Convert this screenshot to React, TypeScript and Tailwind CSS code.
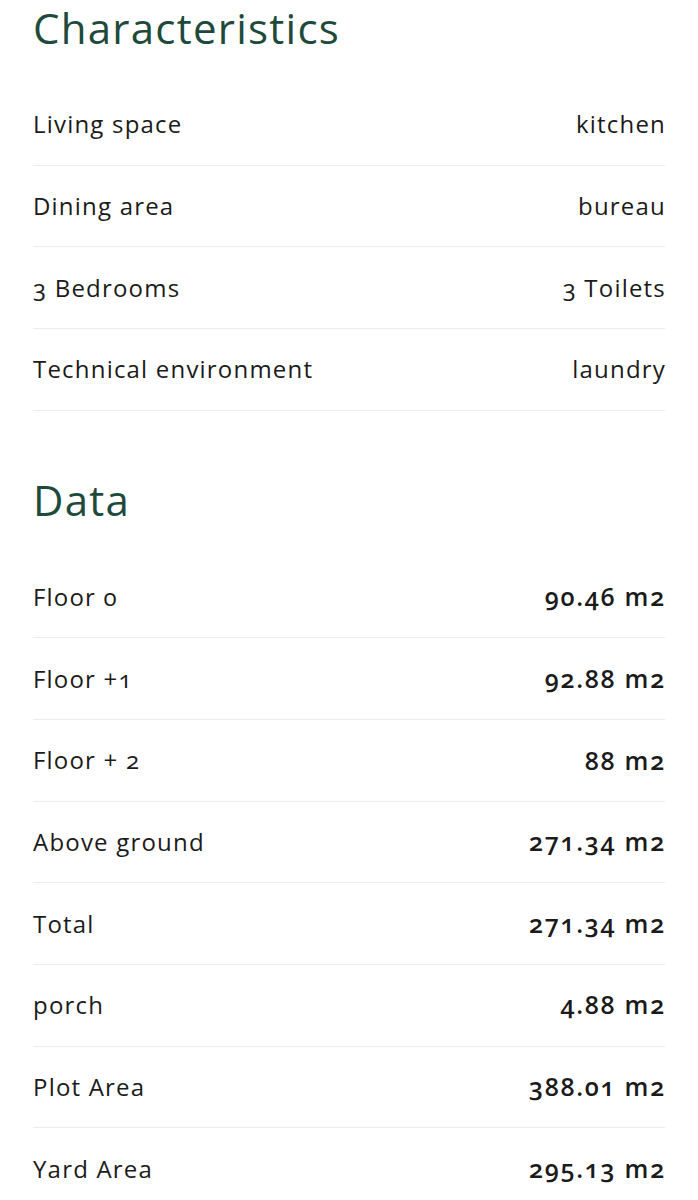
const characteristics: [string, string][] = [
  ['Living space', 'kitchen'],
  ['Dining area', 'bureau'],
  ['3 Bedrooms', '3 Toilets'],
  ['Technical environment', 'laundry'],
];

const data: [string, string][] = [
  ['Floor 0', '90.46 m2'],
  ['Floor +1', '92.88 m2'],
  ['Floor + 2', '88 m2'],
  ['Above ground', '271.34 m2'],
  ['Total', '271.34 m2'],
  ['porch', '4.88 m2'],
  ['Plot Area', '388.01 m2'],
  ['Yard Area', '295.13 m2'],
];

function Row({ label, value, strong }: { label: string; value: string; strong?: boolean }) {
  return (
    <div className="flex h-[81.67px] items-center justify-between border-b border-[#ececec] text-[24px] tracking-[0.05em] text-[#1b1b1b]">
      <span>{label}</span>
      <span className={strong ? '-mr-[1px] text-[25px] font-semibold tracking-[0.07em]' : '-mr-[1px]'}>{value}</span>
    </div>
  );
}

export default function App() {
  return (
    <div
      className="min-h-screen bg-white px-[33px] [font-variant-numeric:oldstyle-nums]"
      style={{ fontFamily: '"Open Sans", sans-serif' }}
    >
      <h2 className="pt-[7px] text-[42px] leading-none tracking-[0.03em] text-[#1e4a3b]">Characteristics</h2>
      <div className="mt-[35px]">
        {characteristics.map(([l, v]) => (
          <Row key={l} label={l} value={v} />
        ))}
      </div>

      <h2 className="mt-[68px] text-[42px] leading-none tracking-[0.03em] text-[#1e4a3b]">Data</h2>
      <div className="mt-[36px]">
        {data.map(([l, v]) => (
          <Row key={l} label={l} value={v} strong />
        ))}
      </div>
    </div>
  );
}
